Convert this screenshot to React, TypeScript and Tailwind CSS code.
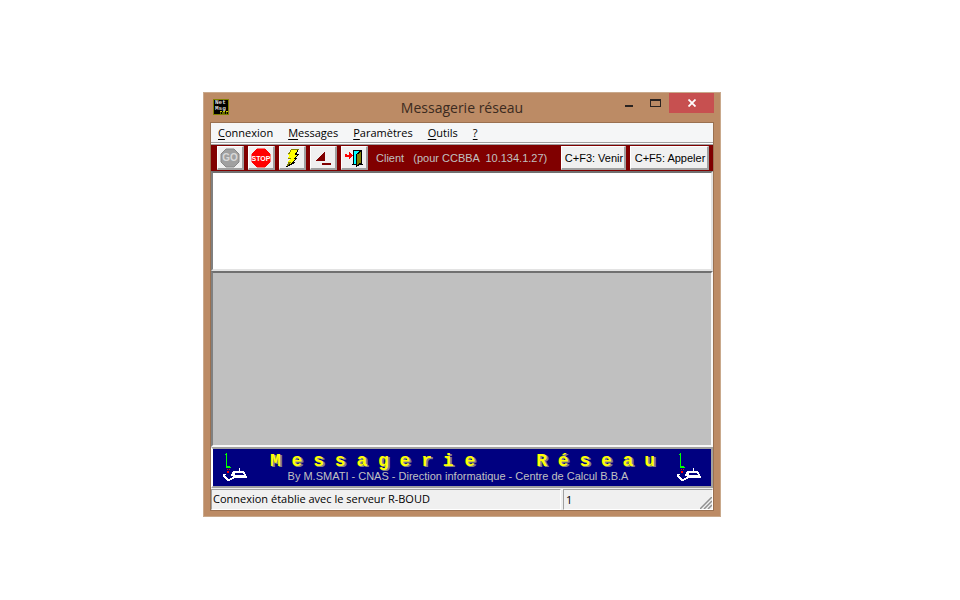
import type { ReactNode } from "react";

const menus = ["Connexion", "Messages", "Paramètres", "Outils", "?"];

const raised =
  "flex h-[24px] shrink-0 items-center justify-center border-t border-l border-r-2 border-b-2 border-t-white border-l-white border-r-[#a0a0a0] border-b-[#a0a0a0] bg-[#f0f0f0]";

function ToolButton({ label, children }: { label: string; children: ReactNode }) {
  return (
    <button type="button" aria-label={label} className={`${raised} w-[27px]`}>
      {children}
    </button>
  );
}

function AppIcon() {
  return (
    <svg width="16" height="16" viewBox="0 0 16 16" aria-hidden="true">
      <rect x="0.5" y="0.5" width="15" height="15" fill="#000" stroke="#808000" />
      <g fontFamily="Liberation Mono, monospace" fontWeight="700" fill="#ddd" fontSize="6">
        <text x="2" y="5">Net</text>
        <text x="2" y="11">Msg</text>
      </g>
      <path d="M7 12.5h2M10 12.5h2M13 12.5h2M7 14h1M9 14h3M13 14h1" stroke="#cccc00" />
    </svg>
  );
}

function Sign({ fill, edge, ink, children }: { fill: string; edge: string; ink: string; children: string }) {
  return (
    <svg width="20" height="20" viewBox="0 0 20 20" aria-hidden="true">
      <path d="M6 1h8l5 5v8l-5 5H6l-5-5V6z" fill={fill} stroke={edge} />
      <text
        x="10"
        y="13"
        textAnchor="middle"
        fontFamily="Liberation Sans Narrow, Liberation Sans, sans-serif"
        fontWeight="700"
        fontSize={children.length > 2 ? 7 : 10}
        fill={ink}
      >
        {children}
      </text>
    </svg>
  );
}

function Bolt() {
  return (
    <svg width="20" height="20" viewBox="0 0 20 20" shapeRendering="crispEdges" aria-hidden="true">
      <path
        d="M9.5 1.5h7l-3 5h3l-4 4h2l-4 4h2l-8 4 3-4h-2l3-4h-3l2-4h-1z"
        fill="#ff0"
      />
      <path d="M16.500 1.500l-3 5h3l-4 4h2l-4 4h2l-8 4" fill="none" stroke="#000" />
      <path d="M9.500 1.500h7M9.500 1.500l-3 5M5 17.500l3-3M5.500 14.500h3M5.500 10.500h3" stroke="#808000" />
    </svg>
  );
}

function Flag() {
  return (
    <svg width="20" height="20" viewBox="0 0 20 20" shapeRendering="crispEdges" aria-hidden="true">
      <path d="M12 3v10H2zM9 15h9v2H9z" fill="#800000" />
    </svg>
  );
}

function Exit() {
  return (
    <svg width="20" height="20" viewBox="0 0 20 20" shapeRendering="crispEdges" aria-hidden="true">
      <path d="M9 2h9v14h1v1H8v-1h1z" fill="#000" />
      <path d="M10 3h7v13h-7z" fill="#0ff" />
      <path d="M12.500 6.500l5-4v12l-5 4z" fill="#808000" stroke="#000" />
      <path d="M1 6h2v3H1zM3 7h2V4h1v1h1v1h1v1h1v1H8v1H7v1H6v1H5V9H3z" fill="#f00" />
    </svg>
  );
}

function Emblem() {
  return (
    <svg width="28" height="30" viewBox="0 0 28 30" shapeRendering="crispEdges" className="shrink-0" aria-hidden="true">
      <path d="M5 1h1v13h3v1h1v1H5V3H4V2h1z" fill="#0f0" />
      <path d="M6 17h1v1H6zM8 17h1v1H8zM6 19h2v2H6z" fill="#f00" />
      <path
        d="M2 22h3v1H4v1h1v1h1v1h1v1h2v-1h2v-1h1v1h1v1h-2v1H9v1H6v-1H5v-1H4v-1H3v-1H2zM18 16h1v3h-1zM12 19h11v1h1v2h1v2h1v2H12v-2H10v-2h1v-2h1z"
        fill="#fff"
      />
      <path d="M14 21h8v1h1v1h-9z" fill="#000080" />
    </svg>
  );
}

export default function App() {
  return (
    <main className="min-h-screen bg-white pt-[92px] pr-[239px] pb-4 pl-[203px] font-['Open_Sans','Noto_Sans',sans-serif] text-[11px] text-black">
      <section className="border border-[#c9a98c] bg-[#bc8b65] px-[6px] pb-[5px]" aria-label="Messagerie réseau">
        <header className="flex h-[29px] items-start">
          <div className="w-[99px] pt-[6px] pl-[3px]">
            <AppIcon />
          </div>
          <h1 className="flex-1 pt-[4px] text-center font-['Open_Sans',sans-serif] text-[14px] leading-[22px] text-[#3b2a20]">
            Messagerie réseau
          </h1>
          <div className="flex h-[20px]">
            <button type="button" aria-label="Réduire" className="flex w-[27px] items-center justify-center">
              <span className="mt-[6px] h-[2px] w-[8px] bg-[#2a2320]" />
            </button>
            <button type="button" aria-label="Agrandir" className="flex w-[27px] items-center justify-center">
              <span className="h-[8px] w-[11px] border border-t-2 border-[#2a2320]" />
            </button>
            <button type="button" aria-label="Fermer" className="flex w-[45px] items-center justify-center bg-[#c75050]">
              <svg width="8" height="8" viewBox="0 0 8 8" aria-hidden="true">
                <path d="M0.5 0.5l7 7M7.5 0.5l-7 7" stroke="#fff" strokeWidth="1.8" />
              </svg>
            </button>
          </div>
        </header>

        <div className="border border-[#9a7050] bg-[#f0f0f0]">
          <nav className="flex h-[19px] items-center gap-[15px] bg-[#f5f6f7] pl-[7px]">
            {menus.map((m) => (
              <button key={m} type="button" className="leading-4">
                <span className="underline underline-offset-2">{m[0]}</span>
                {m.slice(1)}
              </button>
            ))}
          </nav>

          <div className="h-[3px] border-t border-b border-t-[#a0a0a0] border-b-[#a0a0a0] bg-white" />

          <div className="flex h-[26px] items-center gap-1 bg-[#800000] pr-[4px] pl-[6px] font-['Liberation_Sans',sans-serif] text-[11px]">
            <ToolButton label="Go">
              <Sign fill="#a0a0a0" edge="#888888" ink="#d8d8d8">GO</Sign>
            </ToolButton>
            <ToolButton label="Stop">
              <Sign fill="#ff0000" edge="#ff0000" ink="#ffffff">STOP</Sign>
            </ToolButton>
            <ToolButton label="Appel rapide">
              <Bolt />
            </ToolButton>
            <ToolButton label="Réduire la fenêtre">
              <Flag />
            </ToolButton>
            <ToolButton label="Quitter">
              <Exit />
            </ToolButton>
            <p className="flex-1 whitespace-pre pl-1 text-[#c0c0c0]">{"Client   (pour CCBBA  10.134.1.27)"}</p>
            <button type="button" className={`${raised} w-[65px] pt-[2px] pl-[2px] whitespace-nowrap`}>
              C+F3: Venir
            </button>
            <button type="button" className={`${raised} w-[79px] pt-[2px] pl-[2px] whitespace-nowrap`}>
              C+F5: Appeler
            </button>
          </div>

          <textarea
            aria-label="Message à envoyer"
            className="block h-[100px] w-full resize-none border-2 border-t-[#707070] border-r-[#e3e3e3] border-b-[#e3e3e3] border-l-[#808080] bg-white outline-none"
          />
          <textarea
            aria-label="Messages reçus"
            readOnly
            className="block h-[176px] w-full resize-none border-2 border-t-[#707070] border-r-[#f8f8f8] border-b-[#f8f8f8] border-l-[#808080] bg-[#c0c0c0] outline-none"
          />

          <div className="flex h-[41px] items-start justify-between border-2 border-t-[#a0a0a0] border-r-[#a0a0a0] border-b-[#a0a0a0] border-l-white bg-[#000080] px-[8px] pt-[3px]">
            <Emblem />
            <div className="flex-1">
              <h2 className="flex justify-between pr-[20px] pl-[21px] font-['Liberation_Mono',monospace] text-[18px] leading-[18px] font-bold whitespace-pre text-[#ffff00] [text-shadow:1px_1px_0_#808080,2px_1px_0_#808080]">
                <span>M e s s a g e r i e</span>
                <span>R é s e a u</span>
              </h2>
              <p className="pr-[8px] text-center font-['Liberation_Sans',sans-serif] text-[11px] leading-[12px] text-[#c0c0c0]">
                By M.SMATI - CNAS - Direction informatique - Centre de Calcul B.B.A
              </p>
            </div>
            <Emblem />
          </div>

          <footer className="mt-[1px] flex h-[21px] gap-[2px] leading-[18px]">
            <p className="flex-1 border border-t-[#a0a0a0] border-r-white border-b-white border-l-[#a0a0a0] pl-[1px]">
              Connexion établie avec le serveur R-BOUD
            </p>
            <div className="flex w-[150px] items-end justify-between border border-t-[#a0a0a0] border-r-white border-b-white border-l-[#a0a0a0] pl-[2px]">
              <span>1</span>
              <svg width="12" height="12" viewBox="0 0 12 12" aria-hidden="true">
                <path d="M0 12L12 0M4 12l8-8M8 12l4-4" stroke="#909090" strokeWidth="1.5" />
              </svg>
            </div>
          </footer>
        </div>
      </section>
    </main>
  );
}
